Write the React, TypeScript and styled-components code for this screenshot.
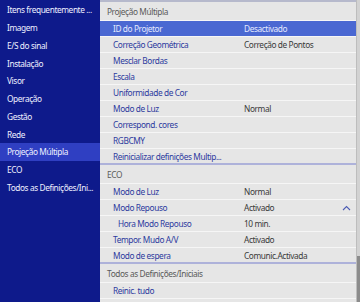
import React from "react";
import styled, { createGlobalStyle } from "styled-components";

const Global = createGlobalStyle`
  html, body { margin: 0; padding: 0; background: #0e1a8b; }
  * { box-sizing: border-box; }
`;

const Screen = styled.div`
  display: flex;
  width: 360px;
  height: 302px;
  overflow: hidden;
  font-family: "Noto Sans", "Open Sans", sans-serif;
  font-size: 8.3px;
  letter-spacing: -0.4px;
`;

const Sidebar = styled.nav`
  width: 100px;
  flex: none;
  background: #0e1a8b;
  padding-top: 1px;
  display: flex;
  flex-direction: column;
`;

const SideItem = styled.div<{ $active?: boolean }>`
  height: 17.75px;
  display: flex;
  align-items: center;
  padding-left: 7px;
  color: #eef1ff;
  background: ${(p) => (p.$active ? "#2f3fc2" : "transparent")};
  white-space: nowrap;
`;

const Main = styled.main`
  flex: 1;
  background: #e6e6e6;
  border-top: 2px solid #b6b9cc;
  display: flex;
  flex-direction: column;
`;

const Section = styled.section`
  display: flex;
  flex-direction: column;
`;

const Header = styled.div`
  height: 19px;
  display: flex;
  align-items: center;
  padding-left: 7px;
  color: #5a5a5a;
  border-bottom: 1px solid #f6f6f6;
`;

const Row = styled.div<{ $active?: boolean; $last?: boolean }>`
  height: 16px;
  display: grid;
  grid-template-columns: 144px 1fr 20px;
  align-items: center;
  background: ${(p) => (p.$active ? "#4a68d2" : "#e6e6e6")};
  border-bottom: ${(p) => (p.$last ? "2px solid #aeb2da" : "1px solid #f6f6f6")};
`;

const Label = styled.span<{ $active?: boolean; $sub?: boolean }>`
  padding-left: ${(p) => (p.$sub ? "18px" : "13px")};
  color: ${(p) => (p.$active ? "#e4eaff" : "#2c3a9e")};
  white-space: nowrap;
`;

const Value = styled.span<{ $active?: boolean }>`
  color: ${(p) => (p.$active ? "#e4eaff" : "#3a3a3a")};
  white-space: nowrap;
`;

const Icon = styled.span`
  display: flex;
  align-items: center;
  justify-content: center;
`;

const Scrollbar = styled.div`
  width: 4px;
  flex: none;
  background: #d2d2d2;
  border-left: 1px solid #bdbdbd;
  display: flex;
  flex-direction: column;
  justify-content: flex-end;
`;

const Thumb = styled.div`
  height: 46px;
  background: #8c8c8c;
`;

type Item = { label: string; value?: string; active?: boolean; sub?: boolean; chevron?: boolean };

const sections: { title: string; items: Item[] }[] = [
  {
    title: "Projeção Múltipla",
    items: [
      { label: "ID do Projetor", value: "Desactivado", active: true },
      { label: "Correção Geométrica", value: "Correção de Pontos" },
      { label: "Mesclar Bordas" },
      { label: "Escala" },
      { label: "Uniformidade de Cor" },
      { label: "Modo de Luz", value: "Normal" },
      { label: "Correspond. cores" },
      { label: "RGBCMY" },
      { label: "Reinicializar definições Multip..." },
    ],
  },
  {
    title: "ECO",
    items: [
      { label: "Modo de Luz", value: "Normal" },
      { label: "Modo Repouso", value: "Activado", chevron: true },
      { label: "Hora Modo Repouso", value: "10 min.", sub: true },
      { label: "Tempor. Mudo A/V", value: "Activado" },
      { label: "Modo de espera", value: "Comunic.Activada" },
    ],
  },
  {
    title: "Todos as Definições/Iniciais",
    items: [{ label: "Reinic. tudo" }],
  },
];

const menu = [
  "Itens frequentemente ...",
  "Imagem",
  "E/S do sinal",
  "Instalação",
  "Visor",
  "Operação",
  "Gestão",
  "Rede",
  "Projeção Múltipla",
  "ECO",
  "Todos as Definições/Ini...",
];

const Chevron = () => (
  <svg width="9" height="6" viewBox="0 0 9 6">
    <path d="M1 5 L4.5 1.5 L8 5" fill="none" stroke="#4c5cb4" strokeWidth="1.1" />
  </svg>
);

export default function App() {
  return (
    <>
      <Global />
      <Screen>
        <Sidebar>
          {menu.map((m) => (
            <SideItem key={m} $active={m === "Projeção Múltipla"}>
              {m}
            </SideItem>
          ))}
        </Sidebar>
        <Main>
          {sections.map((s, si) => (
            <Section key={s.title}>
              <Header>{s.title}</Header>
              {s.items.map((it, i) => (
                <Row
                  key={it.label}
                  $active={it.active}
                  $last={si < sections.length - 1 && i === s.items.length - 1}
                >
                  <Label $active={it.active} $sub={it.sub}>
                    {it.label}
                  </Label>
                  <Value $active={it.active}>{it.value ?? ""}</Value>
                  <Icon>{it.chevron ? <Chevron /> : null}</Icon>
                </Row>
              ))}
            </Section>
          ))}
        </Main>
        <Scrollbar>
          <Thumb />
        </Scrollbar>
      </Screen>
    </>
  );
}
